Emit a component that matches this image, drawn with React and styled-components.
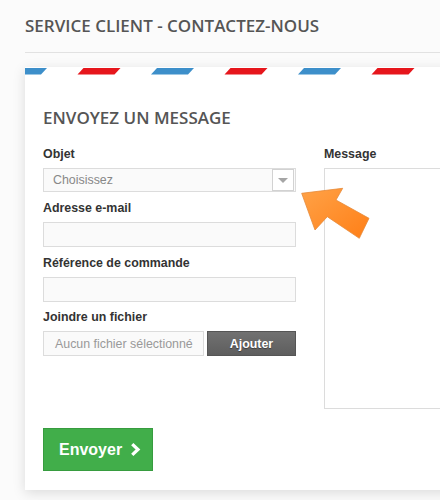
import React from "react";
import styled, { createGlobalStyle } from "styled-components";

const GlobalStyle = createGlobalStyle`
  html, body {
    margin: 0;
    padding: 0;
    background: #fbfbfb;
    overflow: hidden;
  }
`;

const Page = styled.div`
  position: relative;
  width: 440px;
  height: 500px;
  overflow: hidden;
  box-sizing: border-box;
  padding: 15.5px 0 0 25px;
`;

const PageTitle = styled.h1`
  margin: 0;
  font-family: "Open Sans", sans-serif;
  font-weight: 600;
  font-size: 17px;
  line-height: 20px;
  color: #555;
  text-transform: uppercase;
`;

const Divider = styled.div`
  height: 1px;
  margin-top: 16.5px;
  background: #e2e2e2;
`;

const Card = styled.div`
  margin-top: 14px;
  width: 520px;
  background: #fff;
  box-shadow: 0 3px 12px rgba(0, 0, 0, 0.13);
`;

const CardBody = styled.div`
  padding: 33.2px 18px 19px 18px;
`;

const Heading = styled.h2`
  margin: 0 0 19px;
  font-family: "Open Sans", sans-serif;
  font-weight: 600;
  font-size: 17px;
  line-height: 20px;
  color: #555;
  text-transform: uppercase;
`;

const FormGrid = styled.div`
  display: grid;
  grid-template-columns: 253px 1fr;
  column-gap: 28px;
  align-items: start;
`;

const Column = styled.div`
  display: flex;
  flex-direction: column;
  gap: 8.7px;
`;

const Field = styled.div`
  display: flex;
  flex-direction: column;
`;

const Label = styled.label`
  margin-bottom: 6px;
  font-family: "Liberation Sans", Arial, sans-serif;
  font-weight: bold;
  font-size: 12.4px;
  line-height: 15px;
  color: #333;
`;

const TextInput = styled.input`
  box-sizing: border-box;
  width: 100%;
  height: 25px;
  margin: 0;
  padding: 0 9px;
  border: 1px solid #dcdcdc;
  background: #fafafa;
  outline: none;
`;

const SelectBox = styled.div`
  box-sizing: border-box;
  display: flex;
  align-items: center;
  justify-content: space-between;
  height: 24px;
  padding-left: 9px;
  border: 1px solid #dcdcdc;
  background: #fafafa;
  font-family: "Liberation Sans", Arial, sans-serif;
  font-size: 12.4px;
  color: #888;
`;

const SelectArrow = styled.span`
  box-sizing: border-box;
  display: flex;
  align-items: center;
  justify-content: center;
  width: 22px;
  height: 22px;
  margin-right: 1px;
  border: 1px solid #d2d2d2;
  background: #fff;

  &::after {
    content: "";
    border-left: 5px solid transparent;
    border-right: 5px solid transparent;
    border-top: 5px solid #a5a5a5;
  }
`;

const FileRow = styled.div`
  display: flex;
  gap: 3px;
  height: 25px;
`;

const FileName = styled.div`
  box-sizing: border-box;
  display: flex;
  align-items: center;
  width: 161px;
  padding-left: 11px;
  border: 1px solid #dcdcdc;
  background: #fafafa;
  font-family: "Liberation Sans", Arial, sans-serif;
  font-size: 12.4px;
  color: #999;
`;

const AddButton = styled.button`
  flex: 1;
  margin: 0;
  padding: 0;
  border: 1px solid #555;
  background: linear-gradient(#717171, #5e5e5e);
  color: #fff;
  font-family: "Liberation Sans", Arial, sans-serif;
  font-weight: bold;
  font-size: 12.4px;
  text-shadow: 0 1px 1px rgba(0, 0, 0, 0.4);
`;

const MessageArea = styled.textarea`
  box-sizing: border-box;
  display: block;
  width: 100%;
  height: 241px;
  margin: 0;
  border: 1px solid #dcdcdc;
  background: #fff;
  resize: none;
  outline: none;
`;

const SubmitButton = styled.button`
  box-sizing: border-box;
  display: inline-flex;
  align-items: center;
  gap: 8px;
  width: 110px;
  height: 43px;
  margin-top: 19.2px;
  padding: 0 11px 0 15px;
  border: 1px solid #379c3f;
  background: #41ae4a;
  color: #fff;
  font-family: "Liberation Sans", Arial, sans-serif;
  font-weight: bold;
  font-size: 16px;
`;

const PointerArrow = styled.svg`
  position: absolute;
  left: 295px;
  top: 183px;
`;

const STRIPE_COLORS = ["#3d8fca", "#e6161c"];

const AirmailBorder = () => {
  const stripes = [];
  for (let k = 0; k < 9; k++) {
    const x = -21 + 73.5 * k;
    stripes.push(
      <polygon
        key={k}
        points={`${x},7.5 ${x + 37},7.5 ${x + 43},1 ${x + 6},1`}
        fill={STRIPE_COLORS[k % 2]}
      />
    );
  }
  return (
    <svg width="520" height="8" style={{ display: "block" }}>
      {stripes}
    </svg>
  );
};

const Chevron = () => (
  <svg width="12" height="15" viewBox="0 0 12 15">
    <path
      d="M2.5 1.5 L8.8 7.5 L2.5 13.5"
      fill="none"
      stroke="#fff"
      strokeWidth="3.6"
      strokeLinejoin="miter"
    />
  </svg>
);

const App = () => {
  return (
    <Page>
      <GlobalStyle />
      <PageTitle>Service client - contactez-nous</PageTitle>
      <Divider />
      <Card>
        <AirmailBorder />
        <CardBody>
          <Heading>Envoyez un message</Heading>
          <FormGrid>
            <Column>
              <Field>
                <Label>Objet</Label>
                <SelectBox>
                  Choisissez
                  <SelectArrow />
                </SelectBox>
              </Field>
              <Field>
                <Label>Adresse e-mail</Label>
                <TextInput type="text" />
              </Field>
              <Field>
                <Label>Référence de commande</Label>
                <TextInput type="text" />
              </Field>
              <Field>
                <Label>Joindre un fichier</Label>
                <FileRow>
                  <FileName>Aucun fichier sélectionné</FileName>
                  <AddButton type="button">Ajouter</AddButton>
                </FileRow>
              </Field>
            </Column>
            <Field>
              <Label>Message</Label>
              <MessageArea />
            </Field>
          </FormGrid>
          <SubmitButton type="button">
            Envoyer
            <Chevron />
          </SubmitButton>
        </CardBody>
      </Card>
      <PointerArrow width="80" height="62" viewBox="0 0 80 62">
        <defs>
          <linearGradient id="arrowFill" x1="0" y1="0" x2="1" y2="1">
            <stop offset="0" stopColor="#ffa247" />
            <stop offset="1" stopColor="#ff7f17" />
          </linearGradient>
        </defs>
        <polygon
          points="6.7,10.3 47.7,5.3 41,17 74,35.3 64.3,55.3 32.3,33.7 20,47"
          fill="url(#arrowFill)"
          stroke="#e68a3a"
          strokeWidth="0.8"
          strokeLinejoin="round"
        />
      </PointerArrow>
    </Page>
  );
};

export default App;
